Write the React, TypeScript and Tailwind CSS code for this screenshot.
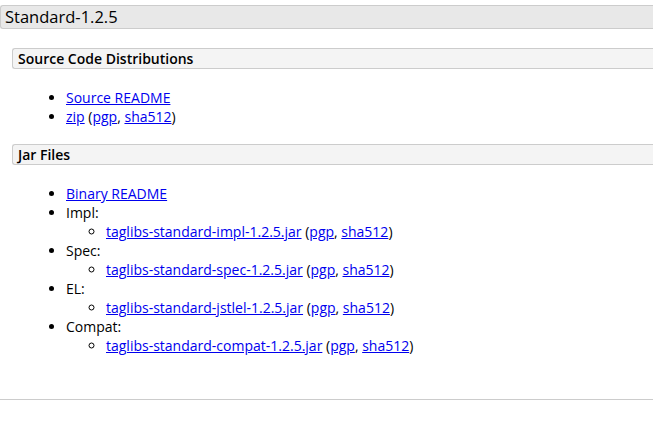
import React from "react";

const A = ({ children }: { children: React.ReactNode }) => (
  <a href="#" className="text-[#0000ee] underline">{children}</a>
);

const Sig = () => (
  <>
    {" "}(<A>pgp</A>, <A>sha512</A>)
  </>
);

export default function App() {
  return (
    <div className="w-[653px] h-[422px] bg-white text-black overflow-hidden" style={{ fontFamily: '"Open Sans", "Liberation Sans", sans-serif' }}>
      <div className="pt-[5px]">
        <div className="h-[24px] bg-[#e8e8e8] border-y border-l border-[#cccccc] rounded-l-[3px] pl-[4px] text-[16.5px] leading-[22px] flex items-center">
          Standard-1.2.5
        </div>
      </div>
      <div className="pl-[12px] mt-[19px]">
        <div className="h-[21px] bg-[#f4f4f4] border-y border-l border-[#cccccc] rounded-l-[3px] pl-[5px] text-[14px] font-semibold leading-[19px] flex items-center">
          Source Code Distributions
        </div>
      </div>
      <ul className="list-disc pl-[66px] mt-[19px] text-[14px] leading-[19px]">
        <li><A>Source README</A></li>
        <li><A>zip</A><Sig /></li>
      </ul>
      <div className="pl-[12px] mt-[18px]">
        <div className="h-[21px] bg-[#f4f4f4] border-y border-l border-[#cccccc] rounded-l-[3px] pl-[5px] text-[14px] font-semibold leading-[19px] flex items-center">
          Jar Files
        </div>
      </div>
      <ul className="list-disc pl-[66px] mt-[19px] text-[14px] leading-[19px]">
        <li><A>Binary README</A></li>
        <li>Impl:
          <ul className="list-[circle] pl-[40px]">
            <li><A>taglibs-standard-impl-1.2.5.jar</A><Sig /></li>
          </ul>
        </li>
        <li>Spec:
          <ul className="list-[circle] pl-[40px]">
            <li><A>taglibs-standard-spec-1.2.5.jar</A><Sig /></li>
          </ul>
        </li>
        <li>EL:
          <ul className="list-[circle] pl-[40px]">
            <li><A>taglibs-standard-jstlel-1.2.5.jar</A><Sig /></li>
          </ul>
        </li>
        <li>Compat:
          <ul className="list-[circle] pl-[40px]">
            <li><A>taglibs-standard-compat-1.2.5.jar</A><Sig /></li>
          </ul>
        </li>
      </ul>
      <div className="mt-[44px] border-t border-[#cccccc]" />
    </div>
  );
}
